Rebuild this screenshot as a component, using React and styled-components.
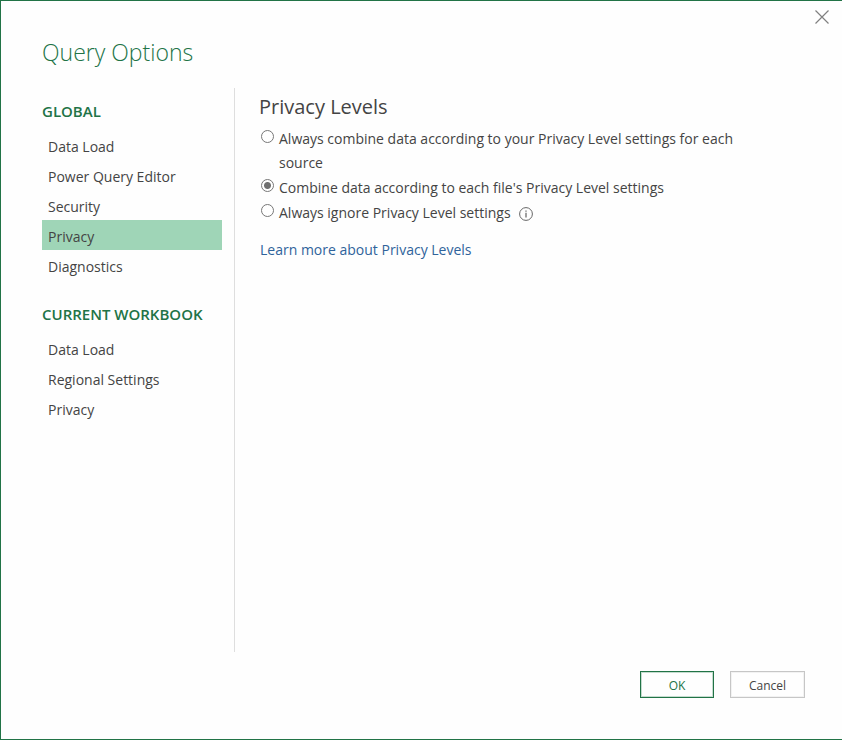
import React, { useState } from "react";
import styled, { createGlobalStyle } from "styled-components";

const GlobalStyle = createGlobalStyle`
  *, *::before, *::after { box-sizing: border-box; }
  body {
    margin: 0;
    background: #fff;
    color: #444;
    font-family: "Open Sans", "Noto Sans", sans-serif;
    font-size: 14px;
    line-height: 24px;
  }
`;

const Dialog = styled.div`
  display: flex;
  flex-direction: column;
  min-height: 100vh;
  border: 1px solid #217346;
  border-right: 0;
  background: #fefefe;
`;

const TitleBar = styled.header`
  display: flex;
  justify-content: space-between;
  align-items: flex-start;
  padding: 0 8px 0 41px;
  height: 87px;
`;

const Title = styled.h1`
  margin: 33px 0 0;
  color: #217346;
  font-size: 23px;
  font-weight: 300;
  line-height: 36px;
`;

const CloseButton = styled.button`
  display: flex;
  align-items: center;
  justify-content: center;
  width: 24px;
  height: 32px;
  padding: 0;
  border: 0;
  background: transparent;
  color: #808080;
`;

const Body = styled.div`
  display: flex;
  flex: 1;
  padding: 0 64px 0 41px;
`;

const Sidebar = styled.nav`
  flex: none;
  width: 193px;
  padding: 11px 12px 0 0;
  border-right: 1px solid #dedede;
`;

const Section = styled.section`
  margin-bottom: 22px;
`;

const SectionTitle = styled.h2`
  margin: 0 0 7px;
  color: #217346;
  font-size: 15px;
  font-weight: 600;
  line-height: 24px;
  white-space: nowrap;
`;

const ItemList = styled.ul`
  margin: 0;
  padding: 0;
  list-style: none;
`;

const Item = styled.button`
  display: block;
  width: 100%;
  height: 30px;
  padding: 3px 6px 0;
  border: 0;
  background: ${(p) => (p.$active ? "#9fd5b7" : "transparent")};
  color: inherit;
  font: inherit;
  text-align: left;
`;

const Main = styled.main`
  flex: 1;
  padding: 4px 0 0 24px;
`;

const PanelTitle = styled.h2`
  margin: 0 0 5px;
  font-size: 20px;
  font-weight: 400;
  line-height: 30px;
`;

const Options = styled.div`
  display: grid;
  gap: 1px;
`;

const Option = styled.label`
  display: flex;
  align-items: flex-start;
  gap: 5px;
`;

const Radio = styled.input`
  appearance: none;
  flex: none;
  width: 13px;
  height: 13px;
  margin: 3px 0 0 2px;
  border: 1px solid #777;
  border-radius: 50%;
  background: #fff;
  &:checked {
    background: radial-gradient(circle, #707070 3px, #fff 4px);
  }
`;

const OptionText = styled.span`
  display: flex;
  align-items: center;
  gap: 8px;
`;

const InfoIcon = styled.svg`
  flex: none;
  margin-top: 2px;
`;

const LearnMore = styled.a`
  display: inline-block;
  margin: 13px 0 0 1px;
  color: #2f639b;
  text-decoration: none;
`;

const Footer = styled.footer`
  display: flex;
  justify-content: flex-end;
  gap: 16px;
  padding: 19px 37px 41px;
`;

const ActionButton = styled.button`
  width: ${(p) => (p.$primary ? "74px" : "75px")};
  height: 27px;
  padding: 2px 0 0;
  border: 1px solid ${(p) => (p.$primary ? "#217346" : "#c6c6c6")};
  box-shadow: inset 0 0 0 1px ${(p) => (p.$primary ? "#c5dccf" : "#f2f2f2")};
  background: #fefefe;
  color: ${(p) => (p.$primary ? "#217346" : "#444")};
  font: inherit;
  font-size: 12px;
`;

const sections = [
  { title: "GLOBAL", items: ["Data Load", "Power Query Editor", "Security", "Privacy", "Diagnostics"] },
  { title: "CURRENT WORKBOOK", items: ["Data Load", "Regional Settings", "Privacy"] },
];

const options = [
  { id: "always", text: "Always combine data according to your Privacy Level settings for each source" },
  { id: "file", text: "Combine data according to each file's Privacy Level settings" },
  { id: "ignore", text: "Always ignore Privacy Level settings", info: true },
];

export default function App() {
  const [page, setPage] = useState("GLOBAL/Privacy");
  const [level, setLevel] = useState("file");
  return (
    <>
      <GlobalStyle />
      <Dialog role="dialog" aria-labelledby="dialog-title">
        <TitleBar>
          <Title id="dialog-title">Query Options</Title>
          <CloseButton type="button" aria-label="Close">
            <svg width="14" height="14" viewBox="0 0 14 14" fill="none" stroke="currentColor" strokeWidth="1.2">
              <path d="M0.5 0.5 13.5 13.5M13.5 0.5 0.5 13.5" />
            </svg>
          </CloseButton>
        </TitleBar>
        <Body>
          <Sidebar aria-label="Option pages">
            {sections.map((s) => (
              <Section key={s.title}>
                <SectionTitle>{s.title}</SectionTitle>
                <ItemList>
                  {s.items.map((name) => {
                    const id = `${s.title}/${name}`;
                    return (
                      <li key={id}>
                        <Item type="button" $active={page === id} onClick={() => setPage(id)}>
                          {name}
                        </Item>
                      </li>
                    );
                  })}
                </ItemList>
              </Section>
            ))}
          </Sidebar>
          <Main>
            <PanelTitle id="panel-title">Privacy Levels</PanelTitle>
            <Options role="radiogroup" aria-labelledby="panel-title">
              {options.map((o) => (
                <Option key={o.id}>
                  <Radio type="radio" name="level" checked={level === o.id} onChange={() => setLevel(o.id)} />
                  <OptionText>
                    {o.text}
                    {o.info && (
                      <InfoIcon width="14" height="14" viewBox="0 0 14 14" fill="none" stroke="#666" aria-hidden="true">
                        <circle cx="7" cy="7" r="6.4" />
                        <path d="M7 5.8v4.7M7 3.5v1.3" strokeWidth="1.4" stroke="#777" />
                      </InfoIcon>
                    )}
                  </OptionText>
                </Option>
              ))}
            </Options>
            <LearnMore href="#privacy-levels">Learn more about Privacy Levels</LearnMore>
          </Main>
        </Body>
        <Footer>
          <ActionButton type="button" $primary>OK</ActionButton>
          <ActionButton type="button">Cancel</ActionButton>
        </Footer>
      </Dialog>
    </>
  );
}
